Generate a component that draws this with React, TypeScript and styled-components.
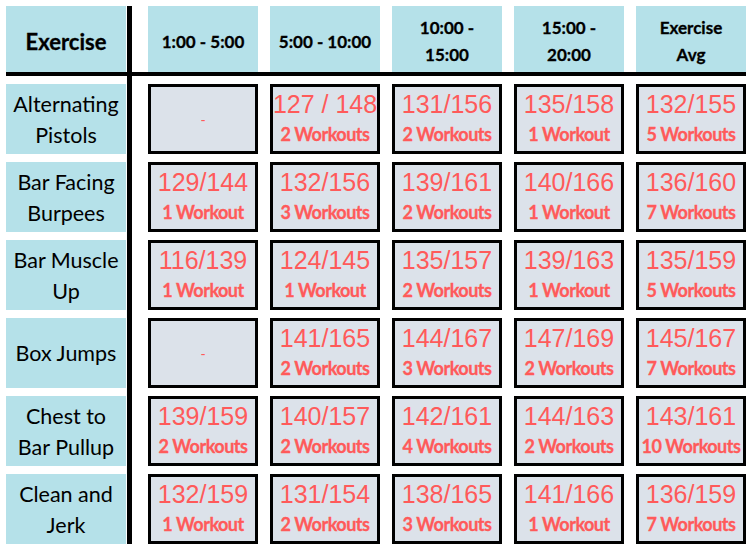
import styled, { createGlobalStyle } from "styled-components";

const GlobalStyle = createGlobalStyle`
  body {
    margin: 0;
    background: #ffffff;
  }
`;

type Result = { score: string; count: number } | null;

const columns = ["1:00 - 5:00", "5:00 - 10:00", "10:00 -\n15:00", "15:00 -\n20:00", "Exercise\nAvg"];

const rows: { name: string; results: Result[] }[] = [
  {
    name: "Alternating\nPistols",
    results: [
      null,
      { score: "127 / 148", count: 2 },
      { score: "131/156", count: 2 },
      { score: "135/158", count: 1 },
      { score: "132/155", count: 5 },
    ],
  },
  {
    name: "Bar Facing\nBurpees",
    results: [
      { score: "129/144", count: 1 },
      { score: "132/156", count: 3 },
      { score: "139/161", count: 2 },
      { score: "140/166", count: 1 },
      { score: "136/160", count: 7 },
    ],
  },
  {
    name: "Bar Muscle\nUp",
    results: [
      { score: "116/139", count: 1 },
      { score: "124/145", count: 1 },
      { score: "135/157", count: 2 },
      { score: "139/163", count: 1 },
      { score: "135/159", count: 5 },
    ],
  },
  {
    name: "Box Jumps",
    results: [
      null,
      { score: "141/165", count: 2 },
      { score: "144/167", count: 3 },
      { score: "147/169", count: 2 },
      { score: "145/167", count: 7 },
    ],
  },
  {
    name: "Chest to\nBar Pullup",
    results: [
      { score: "139/159", count: 2 },
      { score: "140/157", count: 2 },
      { score: "142/161", count: 4 },
      { score: "144/163", count: 2 },
      { score: "143/161", count: 10 },
    ],
  },
  {
    name: "Clean and\nJerk",
    results: [
      { score: "132/159", count: 1 },
      { score: "131/154", count: 2 },
      { score: "138/165", count: 3 },
      { score: "141/166", count: 1 },
      { score: "136/159", count: 7 },
    ],
  },
];

const Page = styled.div`
  padding: 6px;
`;

const Board = styled.div`
  display: grid;
  grid-template-columns: 120px 5px auto;
  grid-template-rows: 66px 4px auto;
  column-gap: 1px;
  width: max-content;
`;

const HeaderCell = styled.div<{ $big?: boolean }>`
  display: flex;
  align-items: center;
  justify-content: center;
  text-align: center;
  white-space: pre-line;
  background: #b5e1e9;
  color: #000;
  font-family: Lato, "Liberation Sans", sans-serif;
  font-weight: 700;
  font-size: ${(p) => (p.$big ? "22px" : "17px")};
  line-height: 27px;
  padding-top: 4px;
  -webkit-text-stroke: 0.3px #000;
  box-sizing: border-box;
`;

const VerticalRule = styled.div`
  grid-column: 2;
  grid-row: 1 / span 3;
  background: #000;
`;

const HorizontalRule = styled.div`
  grid-column: 1 / -1;
  grid-row: 2;
  background: #000;
`;

const HeaderRow = styled.div`
  grid-column: 3;
  grid-row: 1;
  display: grid;
  grid-template-columns: repeat(5, 110px);
  column-gap: 12px;
  padding-left: 15px;
`;

const LabelColumn = styled.div`
  grid-column: 1;
  grid-row: 3;
  display: grid;
  grid-auto-rows: 70px;
  row-gap: 8px;
  padding-top: 8px;
`;

const Label = styled.div`
  display: flex;
  align-items: center;
  justify-content: center;
  text-align: center;
  white-space: pre-line;
  background: #b5e1e9;
  color: #000;
  font-family: Lato, "Liberation Sans", sans-serif;
  font-size: 21.5px;
  line-height: 31px;
  padding-top: 1px;
  box-sizing: border-box;
`;

const Body = styled.div`
  grid-column: 3;
  grid-row: 3;
  display: grid;
  grid-template-columns: repeat(5, 110px);
  grid-auto-rows: 70px;
  column-gap: 12px;
  row-gap: 8px;
  padding: 8px 0 0 15px;
`;

const ResultCell = styled.div`
  display: flex;
  flex-direction: column;
  align-items: center;
  justify-content: center;
  background: #dce2ea;
  border: 3px solid #000;
  box-sizing: border-box;
  color: #ff5a5a;
`;

const Score = styled.div`
  font-family: "Liberation Sans", Arial, sans-serif;
  font-size: 25px;
  line-height: 30px;
  margin-top: -1px;
  white-space: nowrap;
`;

const Count = styled.div`
  font-family: Lato, "Liberation Sans", sans-serif;
  font-weight: 700;
  font-size: 18px;
  line-height: 30px;
  letter-spacing: -0.5px;
  -webkit-text-stroke: 0.3px #ff5a5a;
  white-space: nowrap;
`;

const Empty = styled.div`
  font-family: "Liberation Sans", Arial, sans-serif;
  font-size: 14px;
  line-height: 14px;
  padding-top: 2px;
`;

export default function App() {
  return (
    <Page>
      <GlobalStyle />
      <Board>
        <HeaderCell $big>Exercise</HeaderCell>
        <VerticalRule />
        <HeaderRow>
          {columns.map((c) => (
            <HeaderCell key={c}>{c}</HeaderCell>
          ))}
        </HeaderRow>
        <HorizontalRule />
        <LabelColumn>
          {rows.map((r) => (
            <Label key={r.name}>{r.name}</Label>
          ))}
        </LabelColumn>
        <Body>
          {rows.map((r) =>
            r.results.map((res, i) => (
              <ResultCell key={r.name + i}>
                {res ? (
                  <>
                    <Score>{res.score}</Score>
                    <Count>
                      {res.count} {res.count === 1 ? "Workout" : "Workouts"}
                    </Count>
                  </>
                ) : (
                  <Empty>-</Empty>
                )}
              </ResultCell>
            ))
          )}
        </Body>
      </Board>
    </Page>
  );
}
